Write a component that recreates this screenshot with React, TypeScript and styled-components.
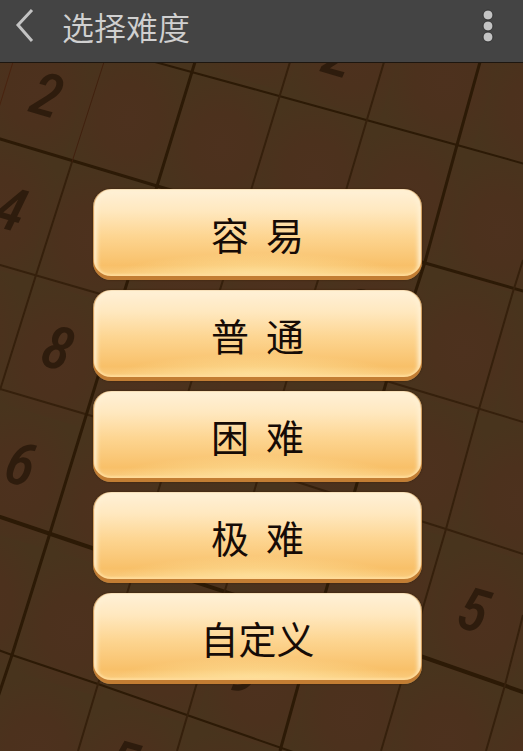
import React from "react";
import styled, { createGlobalStyle } from "styled-components";

const GlobalStyle = createGlobalStyle`
  * { box-sizing: border-box; }
  body {
    margin: 0;
    background: #49331d;
    font-family: "Noto Sans CJK SC", "Noto Sans", sans-serif;
  }
`;

const Page = styled.div`
  min-height: 100vh;
  display: flex;
  flex-direction: column;
`;

const TopBar = styled.header`
  height: 63px;
  display: flex;
  align-items: center;
  padding: 0 20px 10px 12px;
  background: #444444;
  border-bottom: 1px solid #1d160f;
`;

const IconButton = styled.button`
  display: flex;
  padding: 0;
  border: 0;
  background: none;
  color: #c3c3c3;
  cursor: pointer;
`;

const Title = styled.h1`
  flex: 1;
  margin: 0 0 0 24px;
  font-size: 32px;
  line-height: 40px;
  font-weight: 350;
  color: #d0d0d0;
`;

const Content = styled.main`
  flex: 1;
  display: grid;
  position: relative;
  overflow: hidden;
`;

const BoardArt = styled.svg`
  position: absolute;
  inset: 0;
  width: 100%;
  height: 100%;
`;

const Digit = styled.text`
  font-family: "Roboto Condensed", "Noto Sans CJK SC", sans-serif;
  font-size: 60px;
  font-weight: 500;
  font-style: italic;
  fill: #2e1c0d;
  text-anchor: middle;
`;

const Levels = styled.nav`
  position: relative;
  display: flex;
  flex-direction: column;
  gap: 10px;
  padding: 126px 101px 60px 93px;
`;

const LevelButton = styled.button`
  height: 91px;
  padding: 0 0 2px;
  border: 0;
  border-radius: 18px;
  background:
    radial-gradient(ellipse 46% 30% at 50% 100%, #ffe6a4 0%, rgba(255, 226, 154, 0) 100%),
    linear-gradient(180deg, #fff1d8 0%, #ffe8bf 24%, #fdd591 52%, #f8c069 84%, #fbd187 100%);
  box-shadow:
    inset 0 -4px 0 #c27d33,
    inset 1px 0 1px #d09a58,
    inset -1px 0 1px #d09a58,
    inset 0 -6px 2px #ffdb98,
    inset 4px 2px 4px #fff0d2,
    inset -4px 2px 4px #fff0d2,
    0 0 2px #392006;
  font-family: inherit;
  font-size: 38px;
  line-height: 48px;
  font-weight: 400;
  color: #160b06;
  white-space: pre;
  cursor: pointer;
`;

type Point = [number, number];
type Rule = { pts: Point[]; w: number; color: string };

const DARK = "#2c1a06";
const FAINT = "#35200c";

const rows: Rule[] = [
  { pts: [[-60, 2], [155, 62], [261, 91], [457, 145], [600, 185]], w: 2, color: DARK },
  { pts: [[-60, 121], [0, 139], [157, 186], [425, 263], [600, 313]], w: 3, color: DARK },
  { pts: [[-60, 247], [0, 265], [97, 293], [393, 383], [600, 445]], w: 2, color: FAINT },
  { pts: [[-60, 371], [0, 389], [92, 416], [322, 490], [446, 529], [600, 579]], w: 2, color: FAINT },
  { pts: [[-60, 497], [0, 517], [92, 548], [423, 657], [600, 719]], w: 4, color: DARK },
  { pts: [[-60, 629], [12, 655], [98, 684], [290, 751], [420, 795]], w: 2, color: DARK },
];

const columns: Rule[] = [
  { pts: [[13, 62], [-30, 202]], w: 1, color: "#49230f" },
  { pts: [[104, 62], [72, 162]], w: 1, color: "#41200e" },
  { pts: [[72, 162], [36, 275], [0, 390]], w: 2, color: FAINT },
  { pts: [[195, 62], [157, 186], [97, 380], [50, 533], [12, 655], [-20, 751]], w: 3, color: DARK },
  { pts: [[290, 62], [252, 187], [191, 383], [129, 587], [98, 684], [78, 751]], w: 2, color: FAINT },
  { pts: [[384, 62], [347, 187], [286, 383], [226, 587], [196, 686], [177, 751]], w: 2, color: FAINT },
  { pts: [[480, 62], [457, 145], [425, 262], [386, 383], [327, 587], [298, 686], [280, 751]], w: 3, color: DARK },
  { pts: [[523, 260], [512, 295], [479, 409], [446, 529], [400, 686], [381, 751]], w: 2, color: FAINT },
  { pts: [[523, 615], [505, 685], [486, 751]], w: 2, color: FAINT },
];

// Top-left corner of each board square; every square shares one skewed outline.
const squares: Point[] = [];
for (let r = -2; r < 8; r++) {
  for (let c = -3; c < 8; c++) {
    squares.push([157 + c * 93 - r * 37, 186 + c * 28 + r * 121]);
  }
}

const digits: { x: number; y: number; value: string }[] = [
  { x: 41, y: 115, value: "2" },
  { x: 333, y: 75, value: "2" },
  { x: 5, y: 229, value: "4" },
  { x: 52, y: 368, value: "8" },
  { x: 15, y: 484, value: "6" },
  { x: 468, y: 630, value: "5" },
  { x: 349, y: 330, value: "8" },
  { x: 240, y: 692, value: "9" },
  { x: 117, y: 783, value: "5" },
];

const toPoints = (pts: Point[]) => pts.map((p) => p.join(",")).join(" ");

function Board() {
  return (
    <BoardArt viewBox="0 63 523 688" preserveAspectRatio="xMidYMid slice" aria-hidden="true">
      <defs>
        <radialGradient id="wood" cx="50%" cy="55%" r="52%">
          <stop offset="0" stopColor="#4d311e" />
          <stop offset="0.45" stopColor="#4c311d" />
          <stop offset="1" stopColor="#48341d" />
        </radialGradient>
      </defs>
      <rect x="-300" y="-300" width="1200" height="1500" fill="#48341d" />
      {squares.map(([x, y]) => (
        <polygon
          key={`${x}/${y}`}
          fill="url(#wood)"
          points={toPoints([[x, y], [x + 93, y + 28], [x + 56, y + 149], [x - 37, y + 121]])}
        />
      ))}
      {[...rows, ...columns].map((l, i) => (
        <polyline key={i} points={toPoints(l.pts)} fill="none" stroke={l.color} strokeWidth={l.w} />
      ))}
      {digits.map((d) => (
        <Digit key={`${d.x}/${d.y}`} transform={`translate(${d.x} ${d.y}) rotate(16)`}>
          {d.value}
        </Digit>
      ))}
    </BoardArt>
  );
}

const levels = ["容  易", "普  通", "困  难", "极  难", "自定义"];

export default function App() {
  return (
    <Page>
      <GlobalStyle />
      <TopBar>
        <IconButton aria-label="返回">
          <svg width="26" height="38" viewBox="0 0 26 38" fill="none" stroke="currentColor" strokeWidth="3">
            <path d="M20 3 L6 18 L20 34" />
          </svg>
        </IconButton>
        <Title>选择难度</Title>
        <IconButton aria-label="更多">
          <svg width="28" height="36" viewBox="0 0 28 36" fill="currentColor" stroke="#303030" strokeWidth="1">
            <circle cx="13" cy="7" r="5" />
            <circle cx="13" cy="18" r="5" />
            <circle cx="13" cy="29" r="5" />
          </svg>
        </IconButton>
      </TopBar>
      <Content>
        <Board />
        <Levels aria-label="选择难度">
          {levels.map((name) => (
            <LevelButton key={name}>{name}</LevelButton>
          ))}
        </Levels>
      </Content>
    </Page>
  );
}
